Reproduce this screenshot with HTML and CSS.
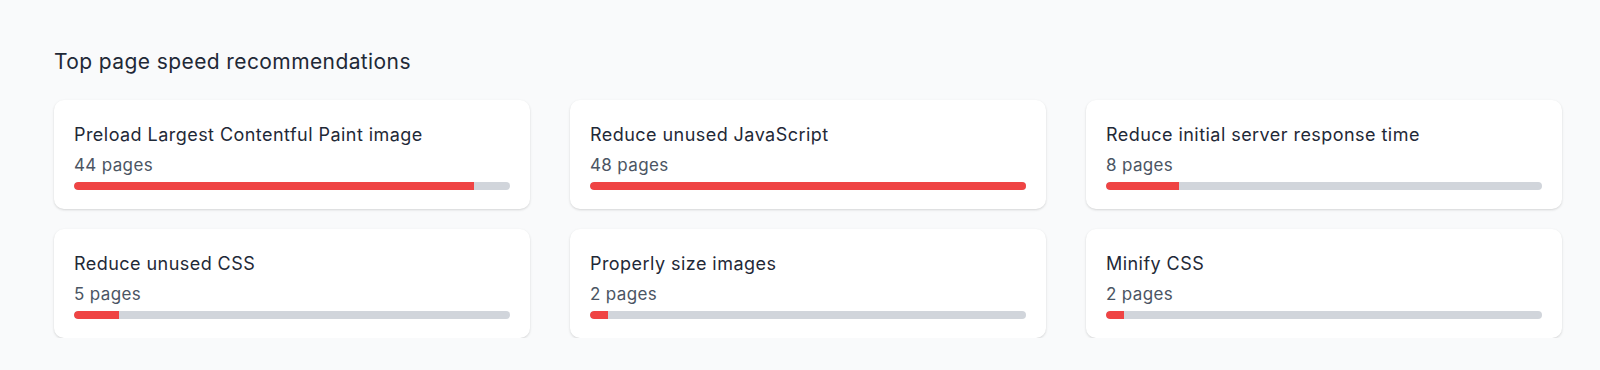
FILE: index.html
```html
<!DOCTYPE html>
<html lang="en">
<head>
    <meta charset="UTF-8">
    <meta name="viewport" content="width=device-width, initial-scale=1.0">
    <title>Page Speed Recommendations</title>
    <link rel="stylesheet" href="styles.css">
</head>
<body>
    <div class="section">
        <h2>Top page speed recommendations</h2>
        <div class="cards">
            <!-- bar widths are pages / 48 (the largest count) -->
            <div class="card">
                <div class="card-title">Preload Largest Contentful Paint image</div>
                <div class="card-count">44 pages</div>
                <div class="bar"><div class="bar-fill" style="width: 91.67%"></div></div>
            </div>
            <div class="card">
                <div class="card-title">Reduce unused JavaScript</div>
                <div class="card-count">48 pages</div>
                <div class="bar"><div class="bar-fill" style="width: 100%"></div></div>
            </div>
            <div class="card">
                <div class="card-title">Reduce initial server response time</div>
                <div class="card-count">8 pages</div>
                <div class="bar"><div class="bar-fill" style="width: 16.67%"></div></div>
            </div>
            <div class="card">
                <div class="card-title">Reduce unused CSS</div>
                <div class="card-count">5 pages</div>
                <div class="bar"><div class="bar-fill" style="width: 10.42%"></div></div>
            </div>
            <div class="card">
                <div class="card-title">Properly size images</div>
                <div class="card-count">2 pages</div>
                <div class="bar"><div class="bar-fill" style="width: 4.17%"></div></div>
            </div>
            <div class="card">
                <div class="card-title">Minify CSS</div>
                <div class="card-count">2 pages</div>
                <div class="bar"><div class="bar-fill" style="width: 4.17%"></div></div>
            </div>
        </div>
    </div>
</body>
</html>
```

FILE: styles.css
```css
body {
    font-family: Inter, "Noto Sans", sans-serif;
    margin: 0;
    background-color: #f9fafb;
    color: #1f2937;
}
.section {
    padding: 48px 38px 0 54px;
}
h2 {
    font-size: 21px;
    line-height: 28px;
    font-weight: 400;
    letter-spacing: 0.4px;
    margin: 0 0 24px 0;
    color: #1f2937;
}
.cards {
    display: grid;
    grid-template-columns: repeat(3, 1fr);
    column-gap: 40px;
    row-gap: 20px;
}
.card {
    background-color: #fff;
    border-radius: 10px;
    padding: 21px 20px 19px 20px;
    box-shadow: 0 1px 3px rgba(0, 0, 0, 0.1), 0 1px 2px rgba(0, 0, 0, 0.06);
}
.card-title {
    font-size: 18px;
    line-height: 28px;
    letter-spacing: 0.45px;
    color: #1f2937;
}
.card-count {
    font-size: 17px;
    line-height: 24px;
    letter-spacing: 0.35px;
    margin-top: 4px;
    color: #4b5563;
}
.bar {
    margin-top: 5px;
    height: 8px;
    border-radius: 4px;
    background-color: #d1d5db;
    overflow: hidden;
}
.bar-fill {
    height: 100%;
    background-color: #ef4444;
    border-radius: 4px 0 0 4px;
}
```
